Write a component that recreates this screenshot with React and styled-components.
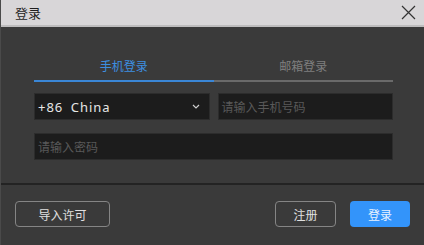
import styled, { createGlobalStyle } from "styled-components";

const GlobalStyle = createGlobalStyle`
  html, body {
    margin: 0;
    padding: 0;
    background: #3a3a3a;
  }
  * {
    box-sizing: border-box;
  }
`;

const FONT = `"Noto Sans CJK SC", "Noto Sans", sans-serif`;

const Window = styled.div`
  width: 424px;
  height: 245px;
  display: flex;
  flex-direction: column;
  background: #3a3a3a;
  border-left: 1px solid #4a4a4a;
  font-family: ${FONT};
`;

const TitleBar = styled.div`
  height: 27px;
  flex: none;
  display: flex;
  align-items: center;
  justify-content: space-between;
  padding: 0 7px 0 14px;
  background: #d8d6d8;
  border-bottom: 2px solid #bdbcbd;
`;

const Title = styled.span`
  font-size: 13px;
  color: #1e1e1e;
  line-height: 1;
`;

const CloseButton = styled.button`
  width: 18px;
  height: 18px;
  padding: 0;
  border: none;
  background: transparent;
  display: flex;
  align-items: center;
  justify-content: center;
`;

const Content = styled.div`
  flex: 1;
  padding: 30px 31px 0 33px;
  display: flex;
  flex-direction: column;
`;

const Tabs = styled.div`
  display: flex;
  margin-bottom: 11px;
`;

const Tab = styled.div`
  flex: 1;
  height: 25px;
  display: flex;
  align-items: flex-start;
  justify-content: center;
  font-size: 12px;
  color: ${(p) => (p.$active ? "#3d8fe0" : "#7f7f7f")};
  border-bottom: 2px solid ${(p) => (p.$active ? "#3a86d6" : "#6a6a6a")};
`;

const Row = styled.div`
  display: flex;
  gap: 8px;
  margin-bottom: 13px;
`;

const Field = styled.div`
  flex: 1;
  height: 27px;
  display: flex;
  align-items: center;
  justify-content: space-between;
  padding: 0 9px 0 3px;
  background: #1c1c1c;
  border: 1px solid #2c2c2c;
  font-size: 12px;
  color: ${(p) => (p.$placeholder ? "#595959" : "#e6e6e6")};
`;

const SelectText = styled.span`
  font-family: "Noto Sans", sans-serif;
  font-size: 13px;
  letter-spacing: 1px;
  word-spacing: 3px;
`;

const Footer = styled.div`
  height: 62px;
  flex: none;
  display: flex;
  align-items: center;
  padding: 0 14px 2px 14px;
  border-top: 2px solid #232323;
`;

const Button = styled.button`
  height: 26px;
  width: ${(p) => p.$width}px;
  margin-left: ${(p) => p.$gap || 0}px;
  border-radius: 4px;
  font-family: ${FONT};
  font-size: 12px;
  padding: 0;
  color: ${(p) => (p.$primary ? "#e8f2ff" : "#e0e0e0")};
  background: ${(p) => (p.$primary ? "#3394fa" : "transparent")};
  border: ${(p) => (p.$primary ? "none" : "1.5px solid #858585")};
`;

const Spacer = styled.div`
  flex: 1;
`;

export default function App() {
  return (
    <>
      <GlobalStyle />
      <Window>
        <TitleBar>
          <Title>登录</Title>
          <CloseButton>
            <svg width="15" height="15" viewBox="0 0 15 15">
              <path d="M1 1 L14 14 M14 1 L1 14" stroke="#333" strokeWidth="1.2" />
            </svg>
          </CloseButton>
        </TitleBar>
        <Content>
          <Tabs>
            <Tab $active>手机登录</Tab>
            <Tab>邮箱登录</Tab>
          </Tabs>
          <Row>
            <Field>
              <SelectText>+86 China</SelectText>
              <svg width="8" height="5" viewBox="0 0 8 5">
                <path d="M1 1 L4 4 L7 1" stroke="#cfcfcf" strokeWidth="1.2" fill="none" />
              </svg>
            </Field>
            <Field $placeholder>请输入手机号码</Field>
          </Row>
          <Row>
            <Field $placeholder>请输入密码</Field>
          </Row>
        </Content>
        <Footer>
          <Button $width={95}>导入许可</Button>
          <Spacer />
          <Button $width={61}>注册</Button>
          <Button $width={60} $gap={14} $primary>
            登录
          </Button>
        </Footer>
      </Window>
    </>
  );
}
